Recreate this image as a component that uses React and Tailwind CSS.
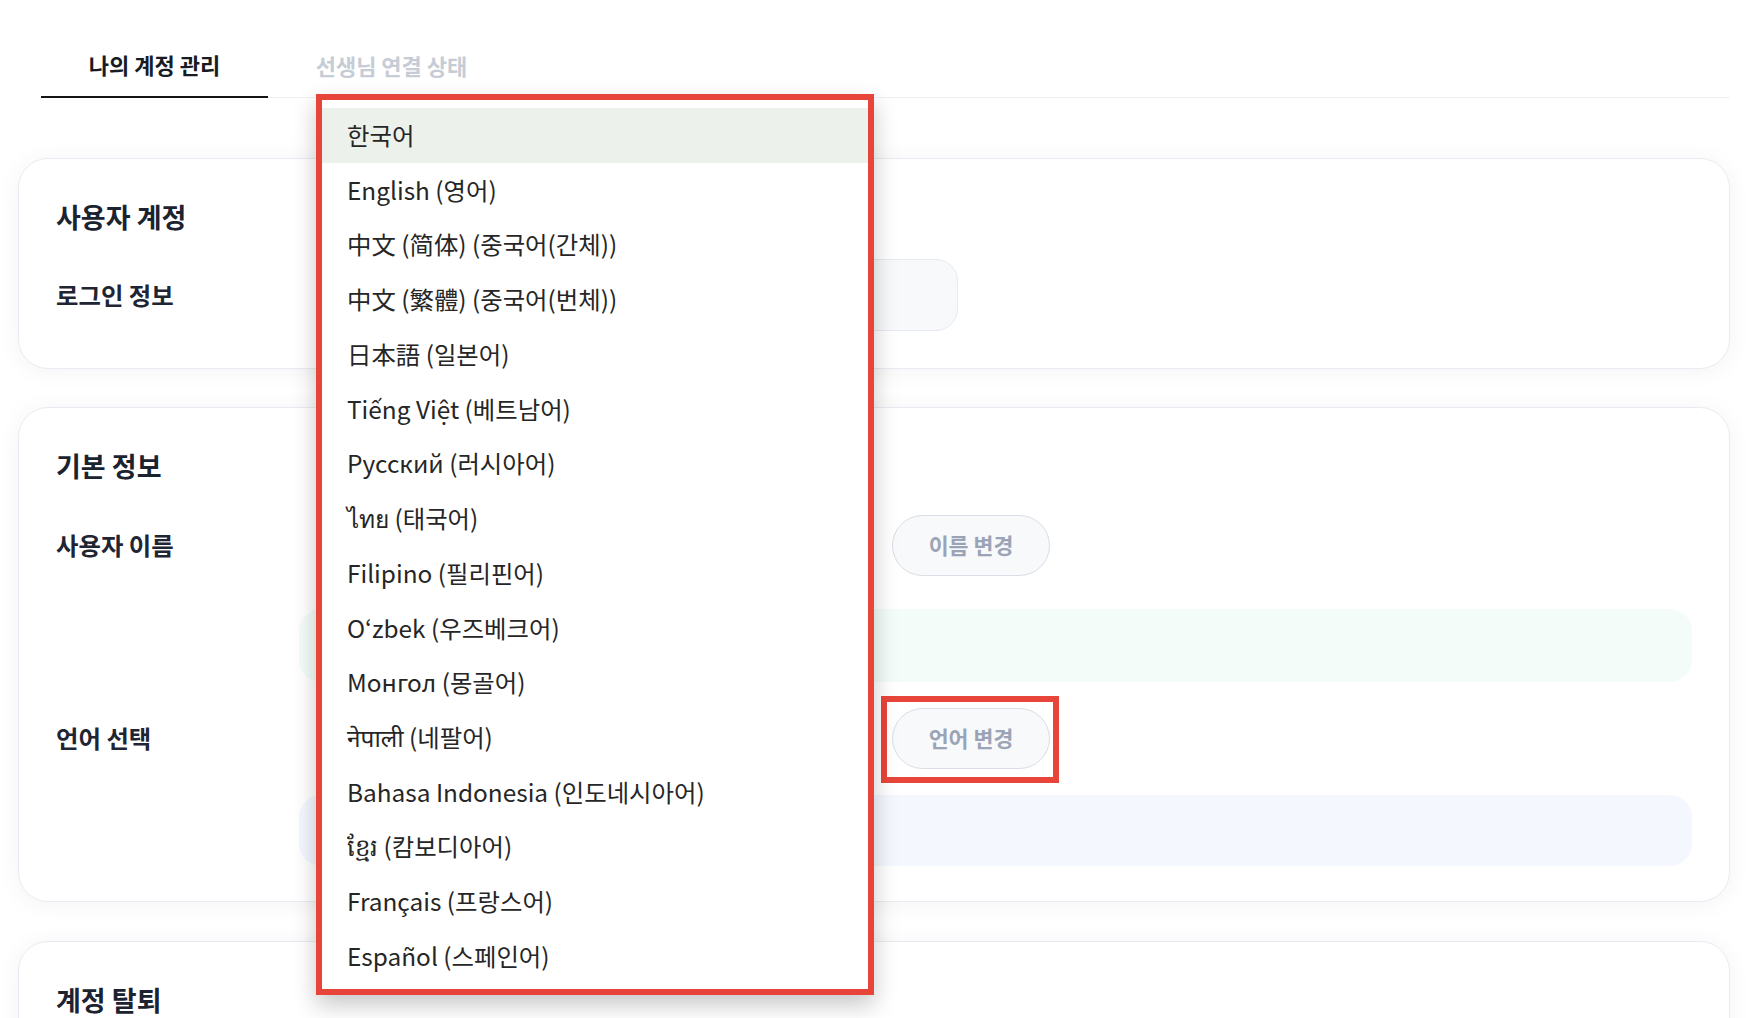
const languages = [
  '한국어',
  'English (영어)',
  '中文 (简体) (중국어(간체))',
  '中文 (繁體) (중국어(번체))',
  '日本語 (일본어)',
  'Tiếng Việt (베트남어)',
  'Русский (러시아어)',
  'ไทย (태국어)',
  'Filipino (필리핀어)',
  'O‘zbek (우즈베크어)',
  'Монгол (몽골어)',
  'नेपाली (네팔어)',
  'Bahasa Indonesia (인도네시아어)',
  'ខ្មែរ (캄보디아어)',
  'Français (프랑스어)',
  'Español (스페인어)',
]

const Card = ({ className = '', children }) => (
  <section
    className={`rounded-[30px] border border-[#e8ecf2] bg-white px-[37px] pt-[36px] shadow-[0_2px_24px_rgba(15,23,42,0.05)] ${className}`}
  >
    {children}
  </section>
)

const CardTitle = ({ children }) => (
  <h2 className="h-[44px] text-[27px] font-bold leading-[44px] text-[#1b2230]">{children}</h2>
)

const RowLabel = ({ children }) => (
  <div className="w-[273px] shrink-0 text-[24.4px] font-bold text-[#1f2533]">{children}</div>
)

const PillButton = ({ children }) => (
  <button className="h-[61px] w-[158px] rounded-full border border-[#d9dde5] bg-[#f8f9fb] text-[21.7px] font-bold text-[#9ba4b6]">
    {children}
  </button>
)

export default function App() {
  return (
    <div className="relative h-[1018px] w-full overflow-hidden bg-white font-['Noto_Sans_CJK_KR','Noto_Sans',sans-serif]">
      <div className="ml-[18px] w-[1712px] pt-[50px]">
        {/* Tabs */}
        <div className="ml-[23px] flex border-b border-[#eef0f4]">
          <button className="-mb-px w-[227px] border-b-2 border-[#141414] pb-[17px] text-[22px] font-bold leading-[29px] text-[#161b24]">
            나의 계정 관리
          </button>
          <button className="w-[247px] pb-[17px] text-[22px] font-bold leading-[29px] text-[#c6ccd5]">
            선생님 연결 상태
          </button>
        </div>

        {/* 사용자 계정 */}
        <Card className="mt-[60px] pb-[37px]">
          <CardTitle>사용자 계정</CardTitle>
          <div className="mt-[20px] flex h-[72px] items-center">
            <RowLabel>로그인 정보</RowLabel>
            <div className="h-[72px] w-[629px] rounded-[22px] border border-[#e6e9ef] bg-[#f8f9fb]" />
          </div>
        </Card>

        {/* 기본 정보 */}
        <Card className="mt-[38px] pb-[35px]">
          <CardTitle>기본 정보</CardTitle>
          <div className="mt-[21px] flex h-[72px] items-center">
            <RowLabel>사용자 이름</RowLabel>
            <div className="h-[72px] w-[543px] rounded-[22px] border border-[#e6e9ef] bg-[#f8f9fb]" />
            <div className="ml-[20px]">
              <PillButton>이름 변경</PillButton>
            </div>
          </div>
          <div className="ml-[243px] mt-[28px] h-[73px] rounded-[22px] bg-[#f3fcf8]" />
          <div className="mt-[20px] flex h-[72px] items-center">
            <RowLabel>언어 선택</RowLabel>
            <div className="h-[72px] w-[543px] rounded-[22px] border border-[#e6e9ef] bg-[#f8f9fb]" />
            <div className="relative ml-[20px]">
              <PillButton>언어 변경</PillButton>
              <span className="pointer-events-none absolute -bottom-[14px] -left-[11px] -right-[9px] -top-[12px] border-[6px] border-[#e8453a]" />
            </div>
          </div>
          <div className="ml-[243px] mt-[21px] h-[71px] rounded-[22px] bg-[#f4f7fe]" />
        </Card>

        {/* 계정 탈퇴 */}
        <Card className="mt-[39px] h-[200px]">
          <CardTitle>계정 탈퇴</CardTitle>
        </Card>
      </div>

      {/* Language dropdown */}
      <ul className="absolute left-[316px] top-[94px] h-[901px] w-[558px] border-[6px] border-[#e8453a] bg-white pt-[8px] shadow-[0_10px_22px_rgba(0,0,0,0.22)]">
        {languages.map((lang, i) => (
          <li
            key={lang}
            className={`flex h-[54.73px] items-center px-[25px] text-[24.4px] text-[#262626] ${i === 0 ? 'bg-[#edf1ec]' : ''}`}
          >
            {lang}
          </li>
        ))}
      </ul>
    </div>
  )
}
